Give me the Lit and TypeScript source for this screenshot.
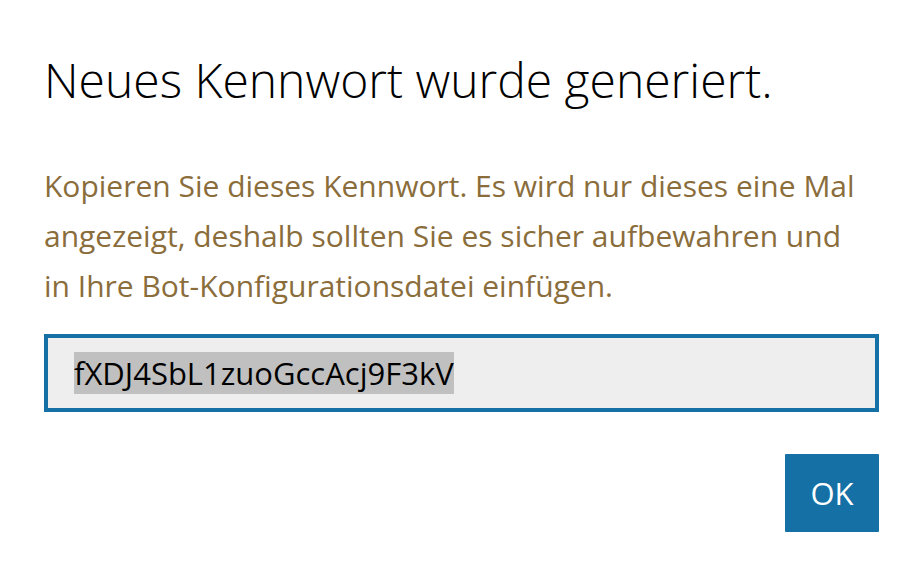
import { LitElement, html, css } from "lit";
import { customElement } from "lit/decorators.js";

@customElement("app-root")
export class AppRoot extends LitElement {
  static styles = css`
    :host {
      display: block;
      min-height: 100vh;
      box-sizing: border-box;
      padding: 44px 42px 34px 44px;
      background: #fff;
      font-family: "Open Sans", "Noto Sans", sans-serif;
    }
    .title {
      margin: 0 0 45px;
      font-size: 48px;
      line-height: 72px;
      font-weight: 300;
      color: #000;
    }
    .message {
      display: block;
      margin: 0 0 23px;
      padding-right: 16px;
      font-size: 30px;
      line-height: 50px;
      color: #8a6d3b;
    }
    .password {
      display: block;
      box-sizing: border-box;
      width: 100%;
      height: 78px;
      margin: 0;
      padding: 0 26px;
      border: 4px solid #1570a6;
      border-radius: 0;
      outline: none;
      background: #eee;
      color: #000;
      font-family: inherit;
      font-size: 31px;
    }
    .password::selection {
      background: #c0c0c0;
      color: #000;
    }
    .actions {
      display: flex;
      justify-content: flex-end;
      margin-top: 42px;
    }
    .ok {
      width: 94px;
      height: 78px;
      padding: 0;
      border: 0;
      border-radius: 1px;
      background: #1570a6;
      color: #fff;
      font-family: inherit;
      font-size: 31px;
    }
  `;

  firstUpdated() {
    const field = this.renderRoot.querySelector("input")!;
    field.focus();
    field.select();
  }

  render() {
    return html`
      <h1 class="title">Neues Kennwort wurde generiert.</h1>
      <label class="message" for="password">Kopieren Sie dieses Kennwort. Es wird nur dieses eine Mal angezeigt, deshalb sollten Sie es sicher aufbewahren und in Ihre Bot-Konfigurationsdatei einfügen.</label>
      <input class="password" id="password" type="text" readonly spellcheck="false" .value=${"fXDJ4SbL1zuoGccAcj9F3kV"} />
      <div class="actions"><button class="ok" type="button">OK</button></div>
    `;
  }
}
